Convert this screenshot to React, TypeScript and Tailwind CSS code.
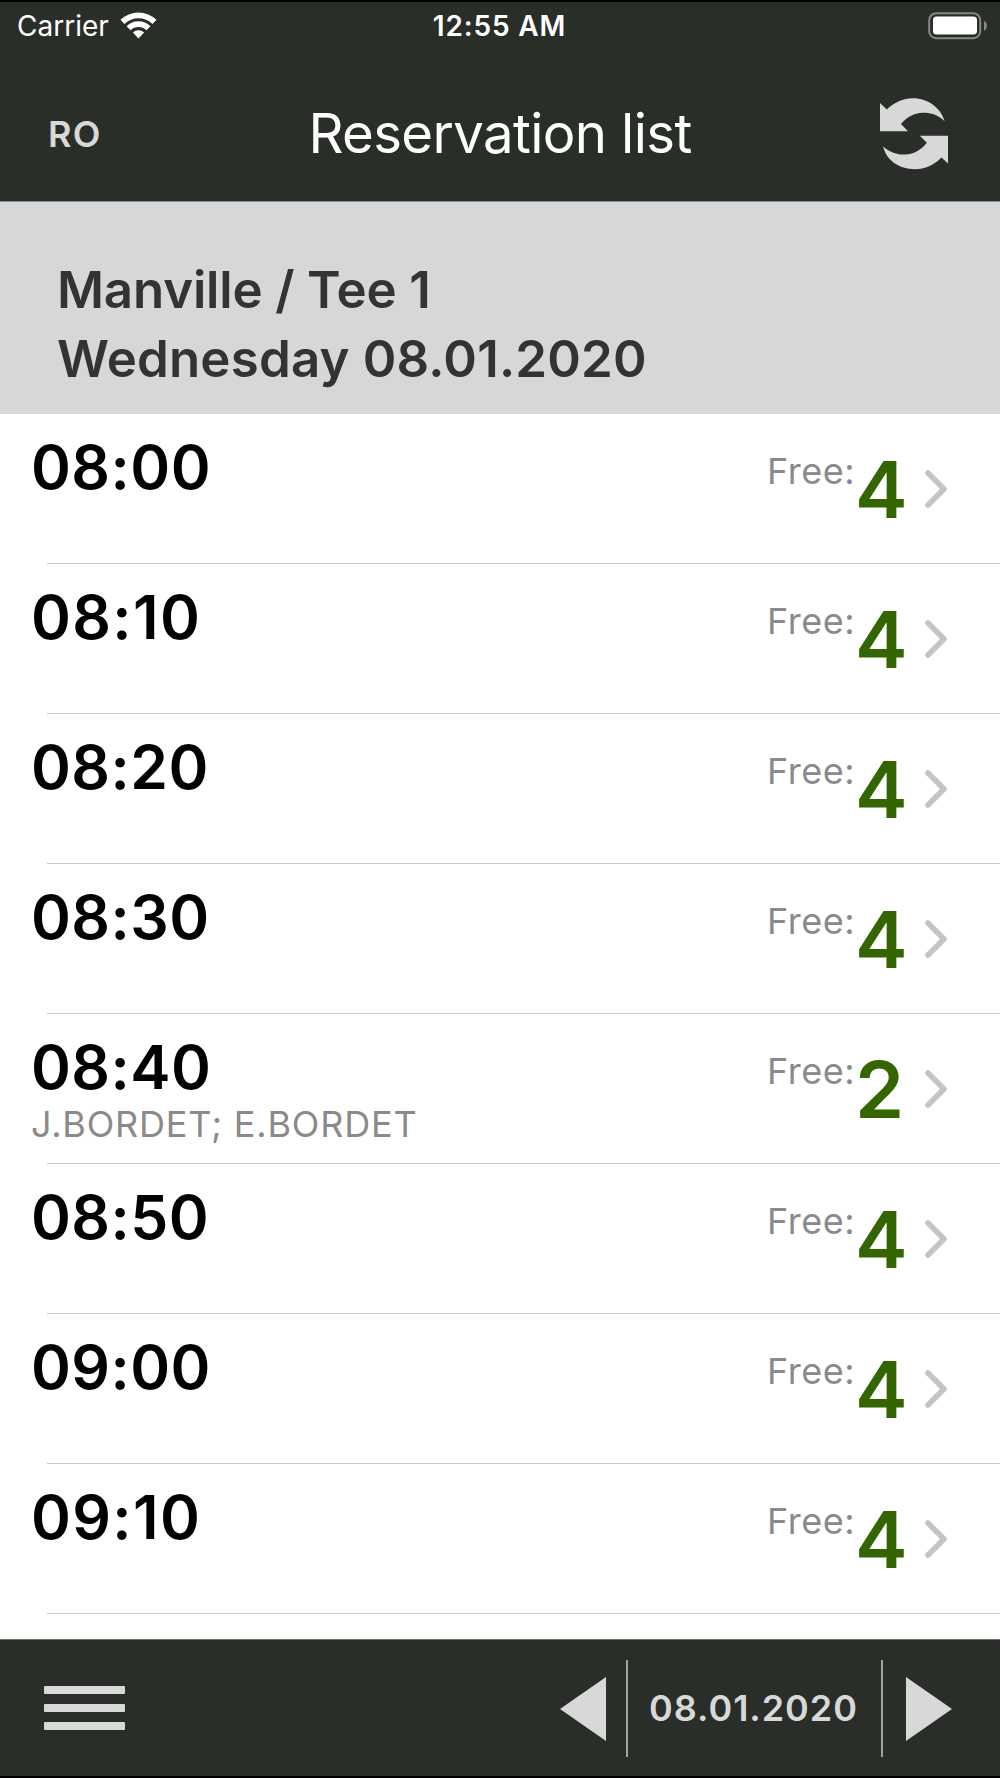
import { clsx } from "clsx";

type Slot = {
  time: string;
  free: number;
  players?: string;
};

const slots: Slot[] = [
  { time: "08:00", free: 4 },
  { time: "08:10", free: 4 },
  { time: "08:20", free: 4 },
  { time: "08:30", free: 4 },
  { time: "08:40", free: 2, players: "J.BORDET; E.BORDET" },
  { time: "08:50", free: 4 },
  { time: "09:00", free: 4 },
  { time: "09:10", free: 4 },
];

function WifiIcon() {
  return (
    <svg viewBox="0 0 37 27" className="ml-[11px] h-[27px] w-[37px]" fill="#fff" aria-hidden>
      <path d="M0.5 7.8A26 26 0 0 1 36.5 7.8L32.5 12A20 20 0 0 0 4.5 12Z" />
      <path d="M6.6 14.2A17 17 0 0 1 30.4 14.2L26.4 18.2A11.4 11.4 0 0 0 10.6 18.2Z" />
      <path d="M12.9 20.6A8 8 0 0 1 24.1 20.6L18.5 26.6Z" />
    </svg>
  );
}

function BatteryIcon() {
  return (
    <svg viewBox="0 0 60 28" className="h-7 w-[60px]" aria-hidden>
      <rect x="1.2" y="1.2" width="51" height="25" rx="7" fill="none" stroke="#858884" strokeWidth="2" />
      <rect x="5" y="4.4" width="44" height="18.2" rx="3.6" fill="#fff" />
      <path d="M56 8.6Q59 10.6 59 13.8T56 19Z" fill="#858884" />
    </svg>
  );
}

function RefreshIcon() {
  return (
    <svg viewBox="0 0 68 72" className="mt-0.5 h-[72px] w-[68px]" fill="#d8d8d8" aria-hidden>
      <path d="M0 5L6.8 11.6C14 4.5 23 .2 33 .2C48 .2 61 10 64.6 23.2C58 16.5 50 14.6 43 14.8C33.5 15 26 20 21 26L28 33.2H0Z" />
      <path d="M68 65.5L61.5 59.5C54 67 45 71.2 35 71.2C19 71.2 6 62 3.2 48.5C9.5 54.5 18 56.8 25 56.6C34.500 56.3 41.5 51.5 46.8 44.8L39.8 37.8H68Z" />
    </svg>
  );
}

function Chevron() {
  return (
    <svg viewBox="0 0 22 38" className="h-[38px] w-[22px]" fill="none" aria-hidden>
      <path d="M3 3L19 19L3 35" stroke="#c4c4c7" strokeWidth="5.6" strokeLinecap="round" strokeLinejoin="round" />
    </svg>
  );
}

function SlotRow({ time, free, players }: Slot) {
  const tracking = time.includes("1") ? "tracking-[1.35px]" : "tracking-[0.45px]";

  return (
    <li className="flex h-[150px] flex-col">
      <div className="flex flex-1">
        <div className="flex-1 pt-5 pl-[31px]">
          <p
            className={clsx(
              "text-[60.5px] leading-[66px] font-semibold text-black [font-kerning:none]",
              tracking
            )}
          >
            {time}
          </p>
          {players && (
            <p className="text-[36px] leading-[48px] tracking-[0.82px] text-[#8a8a8a]">{players}</p>
          )}
        </div>
        <div className="flex w-[233px] items-center">
          <span className="mt-[35px] w-[88px] self-start text-[36px] leading-[44px] tracking-[0.5px] text-[#8a8a8a]">
            Free:
          </span>
          <span className="w-[70px] pt-px text-[79px] leading-none font-semibold text-[#336600]">
            {free}
          </span>
          <Chevron />
        </div>
      </div>
      <div className="ml-[47px] h-px bg-[#c8c8ca]" />
    </li>
  );
}

function Arrow({ flip }: { flip?: boolean }) {
  return (
    <svg
      viewBox="0 0 46 64"
      className={clsx("mt-0.5 h-16 w-[46px]", flip && "rotate-180")}
      fill="#d8d8d8"
      aria-hidden
    >
      <path d="M0 32L46 0V64Z" />
    </svg>
  );
}

export default function App() {
  return (
    <div className="flex h-[1778px] w-[1000px] flex-col overflow-hidden bg-white font-['Inter',sans-serif]">
      <header className="h-[202px] shrink-0 border-t-2 border-b border-t-black border-b-[#8f9190] bg-[#2a2e29] text-white">
        <div className="grid h-[47px] grid-cols-3 items-center pr-3 pl-[17px]">
          <div className="flex items-center">
            <span className="text-[28px] leading-8">Carrier</span>
            <WifiIcon />
          </div>
          <span className="pr-[6px] text-center text-[28px] leading-8 font-semibold tracking-[0.85px]">
            12:55 AM
          </span>
          <div className="flex justify-end">
            <BatteryIcon />
          </div>
        </div>
        <div className="grid h-[152px] grid-cols-[200px_1fr_200px] items-center pt-4 pr-[52px] pl-12">
          <span className="pt-0.5 text-[36px] font-semibold tracking-[1.2px] text-[#d8d8d8]">RO</span>
          <h1 className="pl-1 text-center text-[54.5px] leading-none tracking-[-0.62px] whitespace-nowrap">
            Reservation list
          </h1>
          <div className="flex justify-end">
            <RefreshIcon />
          </div>
        </div>
      </header>

      <section className="h-[212px] shrink-0 bg-[#d6d7d9] pt-[54px] pl-[57px] text-[51px] leading-[68.5px] font-semibold text-[#333]">
        <p className="tracking-[-0.17px]">Manville / Tee 1</p>
        <p className="tracking-[0.18px]">Wednesday 08.01.2020</p>
      </section>

      <ul className="min-h-0 flex-1 overflow-hidden">
        {slots.map((slot) => (
          <SlotRow key={slot.time} {...slot} />
        ))}
      </ul>

      <footer className="flex h-[139px] shrink-0 items-center border-t border-b-2 border-t-[#6f716e] border-b-black bg-[#2a2e29] pr-12 pl-11">
        <div className="flex w-[81px] flex-col gap-[10px]">
          <span className="h-2 rounded-[1px] bg-[#d8d8d8]" />
          <span className="h-2 rounded-[1px] bg-[#d8d8d8]" />
          <span className="h-2 rounded-[1px] bg-[#d8d8d8]" />
        </div>
        <div className="ml-auto flex items-center">
          <Arrow />
          <div className="mr-[23px] ml-5 flex h-[97px] w-[257px] items-center justify-center border-x-2 border-[#a3a5a2] pr-0.5">
            <span className="text-[36px] font-semibold tracking-[0.95px] text-[#d8d8d8]">
              08.01.2020
            </span>
          </div>
          <Arrow flip />
        </div>
      </footer>
    </div>
  );
}
